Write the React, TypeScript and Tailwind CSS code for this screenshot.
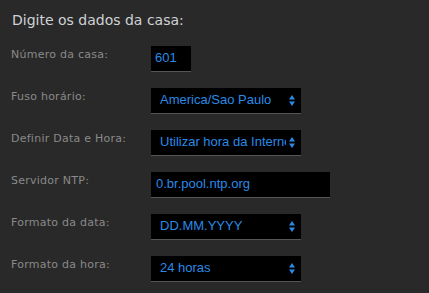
import React from "react";

const Arrows = () => (
  <svg width="6" height="11" viewBox="0 0 6 11" className="shrink-0">
    <polygon points="0,4.5 3,0 6,4.5" fill="#2a8ae6" />
    <polygon points="0,6.5 3,11 6,6.5" fill="#2a8ae6" />
  </svg>
);

const Label = ({ children }: { children: React.ReactNode }) => (
  <div
    className="w-[140px] shrink-0 pt-[1px] text-[11px] leading-[16px] tracking-[0.25px] text-[#8a8a8a]"
    style={{ fontFamily: '"DejaVu Sans", Verdana, sans-serif' }}
  >
    {children}
  </div>
);

const fieldFont = { fontFamily: '"Liberation Sans", Arial, sans-serif' };

const TextBox = ({ value, w }: { value: string; w: string }) => (
  <div
    className={`${w} h-[26px] bg-black border-b border-[#555555] flex items-center pb-[2px] text-[13px] text-[#2a8ae6] whitespace-nowrap overflow-hidden`}
    style={fieldFont}
  >
    {value}
  </div>
);

const SelectBox = ({ value }: { value: string }) => (
  <div
    className="w-[150px] h-[26px] bg-black border-b border-[#555555] flex items-center pb-[2px] pl-[9px] pr-[6px] text-[13px] text-[#2a8ae6]"
    style={fieldFont}
  >
    <span className="flex-1 overflow-hidden whitespace-nowrap">{value}</span>
    <span className="ml-[3px] flex items-center pt-[1px]">
      <Arrows />
    </span>
  </div>
);

export default function App() {
  return (
    <div className="w-full h-screen bg-[#292929] pl-[11px] pt-[10px] overflow-hidden">
      <div
        className="text-[14px] leading-[20px] text-[#cfd2d6] pl-[1px]"
        style={{ fontFamily: '"DejaVu Sans", Verdana, sans-serif' }}
      >
        Digite os dados da casa:
      </div>
      <div className="mt-[16px] flex flex-col gap-[16px]">
        <div className="flex items-start">
          <Label>Número da casa:</Label>
          <TextBox value="601" w="w-[40px] pl-[4px]" />
        </div>
        <div className="flex items-start">
          <Label>Fuso horário:</Label>
          <SelectBox value="America/Sao Paulo" />
        </div>
        <div className="flex items-start">
          <Label>Definir Data e Hora:</Label>
          <SelectBox value="Utilizar hora da Internet" />
        </div>
        <div className="flex items-start">
          <Label>Servidor NTP:</Label>
          <TextBox value="0.br.pool.ntp.org" w="w-[179px] pl-[5px]" />
        </div>
        <div className="flex items-start">
          <Label>Formato da data:</Label>
          <SelectBox value="DD.MM.YYYY" />
        </div>
        <div className="flex items-start">
          <Label>Formato da hora:</Label>
          <SelectBox value="24 horas" />
        </div>
      </div>
    </div>
  );
}
